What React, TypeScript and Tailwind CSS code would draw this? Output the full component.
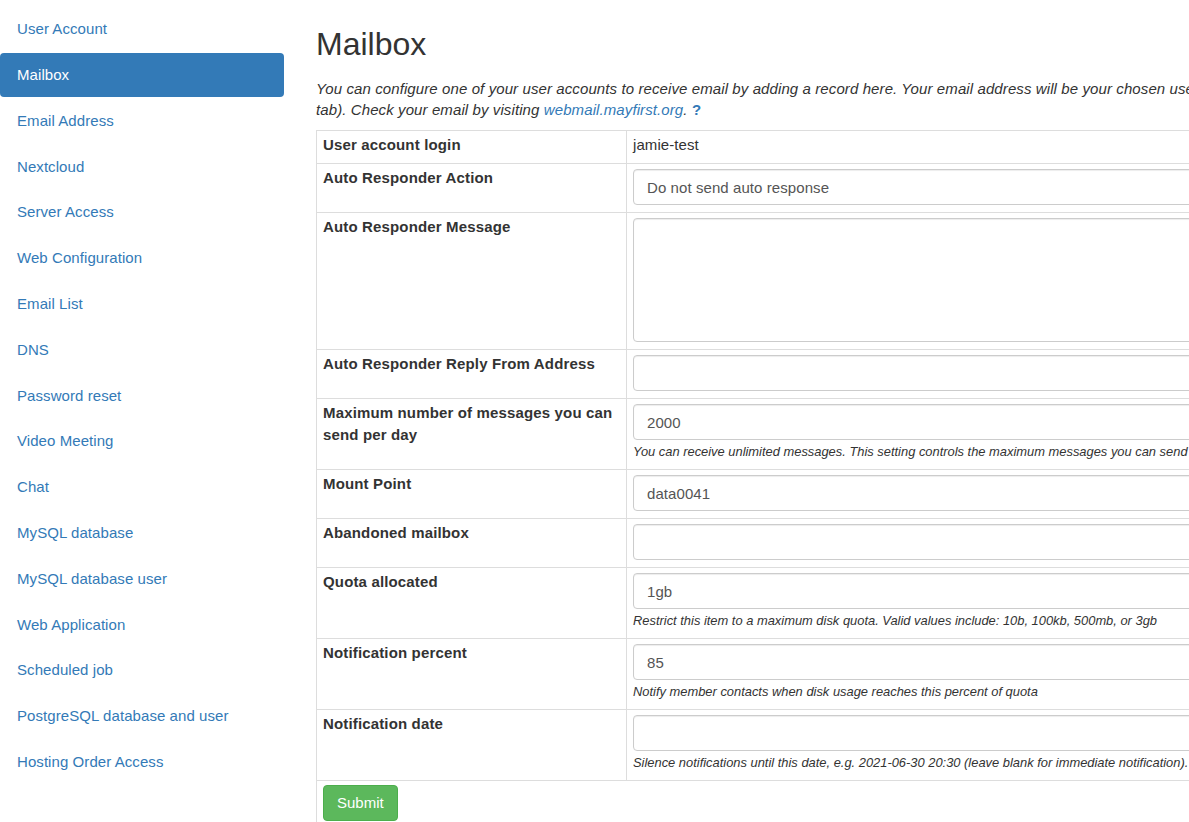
import React from "react"

const NAV = [
  "User Account",
  "Mailbox",
  "Email Address",
  "Nextcloud",
  "Server Access",
  "Web Configuration",
  "Email List",
  "DNS",
  "Password reset",
  "Video Meeting",
  "Chat",
  "MySQL database",
  "MySQL database user",
  "Web Application",
  "Scheduled job",
  "PostgreSQL database and user",
  "Hosting Order Access",
]

interface FieldRow {
  label: string
  kind: "input" | "textarea"
  value?: string
  help?: string
}

const FIELDS: FieldRow[] = [
  { label: "Auto Responder Action", kind: "input", value: "Do not send auto response" },
  { label: "Auto Responder Message", kind: "textarea" },
  { label: "Auto Responder Reply From Address", kind: "input" },
  {
    label: "Maximum number of messages you can send per day",
    kind: "input",
    value: "2000",
    help: "You can receive unlimited messages. This setting controls the maximum messages you can send per day.",
  },
  { label: "Mount Point", kind: "input", value: "data0041" },
  { label: "Abandoned mailbox", kind: "input" },
  {
    label: "Quota allocated",
    kind: "input",
    value: "1gb",
    help: "Restrict this item to a maximum disk quota. Valid values include: 10b, 100kb, 500mb, or 3gb",
  },
  {
    label: "Notification percent",
    kind: "input",
    value: "85",
    help: "Notify member contacts when disk usage reaches this percent of quota",
  },
  {
    label: "Notification date",
    kind: "input",
    help: "Silence notifications until this date, e.g. 2021-06-30 20:30 (leave blank for immediate notification).",
  },
]

const controlCls =
  "block w-full rounded-[4px] border border-[#ccc] bg-white px-[13px] text-[15px] tracking-[0.08px] text-[#555] shadow-[inset_0_1px_1px_rgba(0,0,0,0.075)] outline-none"

export default function App() {
  return (
    <div className="flex h-[822px] w-full overflow-hidden bg-white font-['Liberation_Sans',Arial,sans-serif] text-[15px] leading-[1.42857] text-[#333]">
      {/* sidebar */}
      <nav className="flex w-[284px] shrink-0 flex-col gap-[2px] pt-[7px] tracking-[0.07px]">
        {NAV.map(item => (
          <a
            key={item}
            href="#"
            className={
              item === "Mailbox"
                ? "flex h-[43.8px] items-center rounded-[4px] bg-[#337ab7] pl-[17px] text-white"
                : "flex h-[43.8px] items-center rounded-[4px] pl-[17px] text-[#337ab7]"
            }
          >
            {item}
          </a>
        ))}
      </nav>

      {/* main */}
      <main className="ml-[32px] w-[1100px] shrink-0">
        <h1 className="mt-[26px] text-[32px] font-normal leading-[36px] text-[#333]">Mailbox</h1>
        <p className="mb-[10px] mt-[16px] italic leading-[21px] tracking-[0.1px]">
          <span className="whitespace-nowrap">
            You can configure one of your user accounts to receive email by adding a record here. Your email address will be your chosen user name (see the Email Address
          </span>
          <br />
          tab). Check your email by visiting{" "}
          <a href="#" className="text-[#337ab7]">webmail.mayfirst.org</a>.{" "}
          <span className="font-bold not-italic text-[#337ab7]">?</span>
        </p>

        <table className="w-full border-collapse">
          <tbody>
            <tr>
              <td className="w-[310px] border border-[#ddd] px-[6px] pb-[7px] pt-[3px] align-top font-bold leading-[22px] tracking-[0.15px]">
                User account login
              </td>
              <td className="border border-[#ddd] px-[6px] pb-[7px] pt-[3px] align-top leading-[22px] tracking-[0.08px]">jamie-test</td>
            </tr>
            {FIELDS.map(f => (
              <tr key={f.label}>
                <td className="border border-[#ddd] px-[6px] pt-[3px] align-top font-bold leading-[22px] tracking-[0.15px]">
                  {f.label === "Maximum number of messages you can send per day" ? (
                    <>Maximum number of messages you can<br />send per day</>
                  ) : (
                    f.label
                  )}
                </td>
                <td className="border border-[#ddd] px-[6px] pb-[7px] pt-[5px] align-top">
                  {f.kind === "textarea" ? (
                    <textarea readOnly className={controlCls + " h-[124px] resize-none py-[6px]"} />
                  ) : (
                    <input readOnly defaultValue={f.value ?? ""} className={controlCls + " h-[36px]"} />
                  )}
                  {f.help && (
                    <div className="mb-[2px] mt-[3px] whitespace-nowrap text-[12.9px] italic leading-[17px] text-[#333]">
                      {f.help}
                    </div>
                  )}
                </td>
              </tr>
            ))}
            <tr>
              <td colSpan={2} className="border border-[#ddd] px-[6px] pb-[6px] pt-[4px]">
                <button className="h-[36px] rounded-[4px] border border-[#4cae4c] bg-[#5cb85c] px-[13px] text-[15px] text-white">
                  Submit
                </button>
              </td>
            </tr>
          </tbody>
        </table>
      </main>
    </div>
  )
}
